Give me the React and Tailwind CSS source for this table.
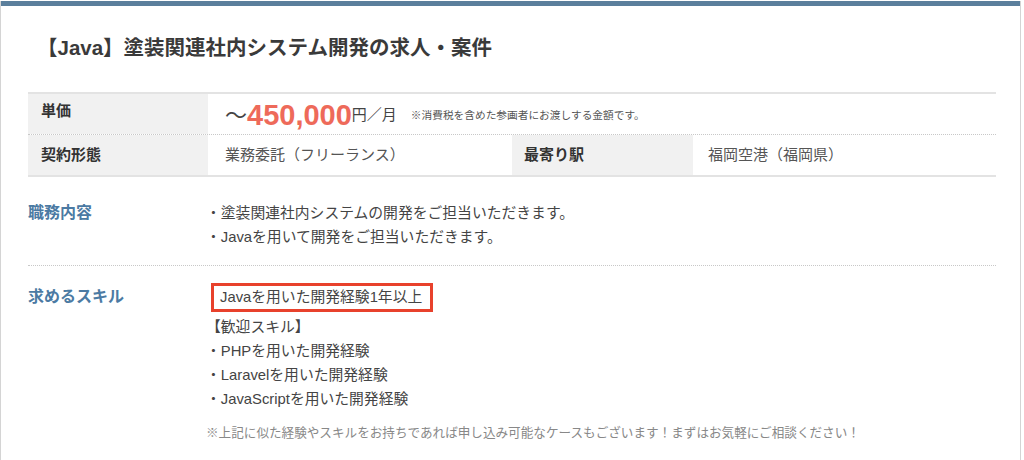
export default function App() {
  const font = { fontFamily: '"Liberation Sans", "Noto Sans CJK JP", sans-serif' };
  return (
    <div className="w-[1024px] h-[460px] bg-white overflow-hidden" style={font}>
      <div className="w-[1021px] h-[460px] border-l border-r border-[#d4d4d4] mt-px">
        <div className="h-[5px] bg-[#5b7f9c]" />
        <div className="pl-[36px] pt-[27px] h-[86px]">
          <h1 className="text-[20.5px] leading-[30px] font-bold text-[#3a3a3a]">【Java】塗装関連社内システム開発の求人・案件</h1>
        </div>
        <div className="ml-[27px] w-[968px] border-t-2 border-b-2 border-[#e3e3e3] text-[#444]">
          <div className="flex h-[41px] border-b border-dotted border-[#c8c8c8]">
            <div className="w-[180px] bg-[#f1f1f1] pl-[13px] pt-[6px] text-[15px] font-bold text-[#333]">単価</div>
            <div className="flex items-center pl-[17px] pt-[2px]">
              <span className="text-[22px] text-[#444]">～</span>
              <span className="text-[29px] font-bold text-[#ee6a5a] leading-none">450,000</span>
              <span className="text-[15px] text-[#444]">円／月</span>
              <span className="ml-[14px] text-[10.7px] text-[#555]">※消費税を含めた参画者にお渡しする金額です。</span>
            </div>
          </div>
          <div className="flex h-[40px] items-stretch text-[15px]">
            <div className="w-[180px] bg-[#f1f1f1] pl-[13px] flex items-center font-bold text-[#333]">契約形態</div>
            <div className="w-[304px] pl-[17px] flex items-center text-[#555]">業務委託（フリーランス）</div>
            <div className="w-[181px] bg-[#f1f1f1] pl-[12px] flex items-center font-bold text-[#333]">最寄り駅</div>
            <div className="pl-[15px] flex items-center text-[#555]">福岡空港（福岡県）</div>
          </div>
        </div>
        <div className="ml-[27px] w-[968px] flex pt-[24px] pb-[16px] border-b border-dotted border-[#c8c8c8]">
          <div className="w-[178px] text-[16px] font-bold text-[#4b7aa3] leading-[24px]">職務内容</div>
          <div className="text-[14.8px] text-[#444] leading-[24px]">
            <p>・塗装関連社内システムの開発をご担当いただきます。</p>
            <p>・Javaを用いて開発をご担当いただきます。</p>
          </div>
        </div>
        <div className="ml-[27px] w-[968px] flex pt-[17px]">
          <div className="w-[178px] text-[16px] font-bold text-[#4b7aa3] leading-[24px] pt-[2px]">求めるスキル</div>
          <div className="text-[14.8px] text-[#444] leading-[24px]">
            <div className="ml-[5px] inline-block border-[3px] border-[#e8412c] pl-[6px] pr-[8px] leading-[23px]">Javaを用いた開発経験1年以上</div>
            <p className="mt-[3px]">【歓迎スキル】</p>
            <p>・PHPを用いた開発経験</p>
            <p>・Laravelを用いた開発経験</p>
            <p>・JavaScriptを用いた開発経験</p>
            <p className="mt-[13px] text-[12.6px] leading-[18px] text-[#888]">※上記に似た経験やスキルをお持ちであれば申し込み可能なケースもございます！まずはお気軽にご相談ください！</p>
          </div>
        </div>
      </div>
    </div>
  );
}
